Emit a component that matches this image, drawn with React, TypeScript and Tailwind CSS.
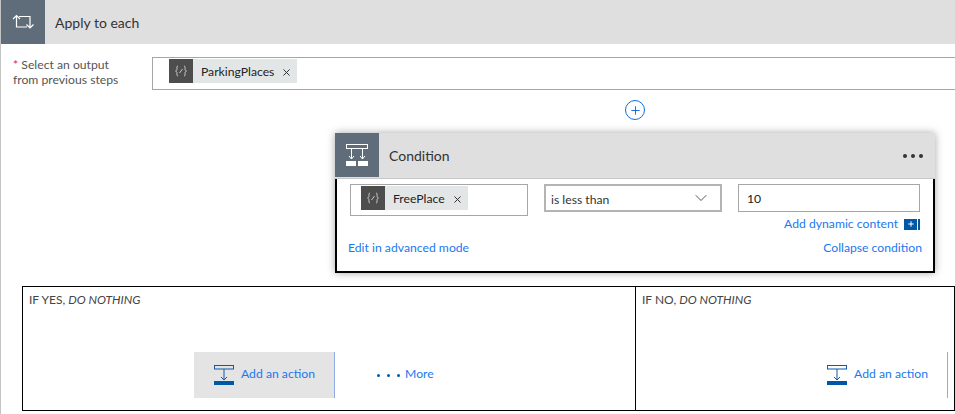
import { X, ChevronDown, Plus } from "lucide-react";

const font = { fontFamily: "Lato, 'Noto Sans', sans-serif" };

function Token({ label }: { label: string }) {
  return (
    <div className="flex h-6 items-center bg-[#e3e6e6]">
      <div className="flex h-6 w-6 items-center justify-center bg-[#4d4d4d]">
        <svg width="14" height="12" viewBox="0 0 14 12" fill="none" stroke="#c8c8c8" strokeWidth="1">
          <path d="M4 1C2.500 1 3 3 3 4S2.600 5.600 1.500 6C2.600 6.400 3 7 3 8s-.5 3 1 3" />
          <path d="M10 1c1.500 0 1 2 1 3s.4 1.600 1.500 2C11.400 6.400 11 7 11 8s.5 3-1 3" />
          <path d="M5.500 8 8.500 4" />
        </svg>
      </div>
      <span className="pl-2 pr-[7px] pt-[2px] text-[12.2px] text-[#222]">{label}</span>
      <X size={11} strokeWidth={2} className="mr-[5px] mt-[3px] text-[#222]" />
    </div>
  );
}

function ActionIcon() {
  return (
    <svg width="20" height="20" viewBox="0 0 20 20" fill="none" className="shrink-0">
      <rect x="0.500" y="0.500" width="19" height="3.500" stroke="#0f5ba8" />
      <path d="M10 4v11M7 12l3 3 3-3" stroke="#0f5ba8" />
      <rect x="0" y="16" width="20" height="4" fill="#0057a6" />
    </svg>
  );
}

export default function App() {
  return (
    <div className="h-[414px] w-[955px] overflow-hidden border-l border-[#c4c4c4] bg-white" style={font}>
      {/* apply to each */}
      <div className="flex h-11 items-center bg-[#dfdfdf]">
        <div className="flex h-11 w-11 items-center justify-center bg-[#5f6d7b]">
          <svg width="22" height="16" viewBox="0 0 22 16" fill="none" stroke="#fff" strokeWidth="1.200">
            <path d="M1 5l3.500-3.500L8 5M4.500 2v11H15" />
            <path d="M7 2.500h11V14M14.500 10.500 18 14l3.500-3.500" />
          </svg>
        </div>
        <span className="pl-[10px] pt-[1px] text-[14px] text-[#333]">Apply to each</span>
      </div>

      <div className="flex pl-3 pt-[13px]">
        <div className="w-[139px] text-[12.2px] leading-[15px] text-[#555]">
          <span className="text-[#e8114e]">*</span> Select an output
          <br />
          from previous steps
        </div>
        <div className="flex h-[33px] flex-1 items-start border border-r-0 border-[#a6a6a6] pl-4 pt-[1px]">
          <Token label="ParkingPlaces" />
        </div>
      </div>

      <div className="flex justify-center pl-[314px] pt-[10px]">
        <div className="flex h-5 w-5 items-center justify-center rounded-full border border-[#0a6fe0] bg-white text-[#0a6fe0]">
          <Plus size={13} strokeWidth={1.8} />
        </div>
      </div>

      {/* condition card */}
      <div className="ml-[334px] mt-[13px] w-[600px] shadow-[0_0_8px_rgba(0,0,0,0.35)]">
        <div className="flex h-[46px] items-center border-b border-[#c8c8c8] bg-[#dfdfdf]">
          <div className="flex h-[44px] w-11 items-center justify-center self-start bg-[#5f6d7b]">
            <svg width="24" height="24" viewBox="0 0 24 24" fill="none">
              <rect x="1.500" y="1.500" width="21" height="4" stroke="#fff" />
              <path d="M6.500 6v10M17.500 6v10M4 13l2.500 3L9 13M15 13l2.500 3 2.500-3" stroke="#fff" />
              <rect x="1" y="18" width="10" height="5" fill="#fff" />
              <rect x="13" y="18" width="10" height="5" fill="#fff" />
            </svg>
          </div>
          <span className="pl-[10px] text-[14px] text-[#333]">Condition</span>
          <div className="ml-auto mr-3 flex gap-1">
            <span className="h-1 w-1 rounded-full bg-[#333]" />
            <span className="h-1 w-1 rounded-full bg-[#333]" />
            <span className="h-1 w-1 rounded-full bg-[#333]" />
          </div>
        </div>
        <div className="h-[94px] border-x-2 border-b-2 border-black bg-white px-[13px]">
          <div className="flex pt-[5px]">
            <div className="flex h-8 w-[178px] items-start border border-[#a6a6a6] pl-[10px] pt-[1px]">
              <Token label="FreePlace" />
            </div>
            <div className="ml-4 flex h-7 w-[178px] items-center justify-between border-2 border-[#b4b4b4] pl-[5px] pr-[9px] pt-[4px] text-[12.2px] text-[#333]">
              is less than
              <ChevronDown size={20} strokeWidth={1} className="-mt-[4px] text-[#333]" />
            </div>
            <div className="ml-4 flex h-7 w-[182px] items-center border border-[#a6a6a6] pl-2 pt-[2px] text-[12.2px] text-[#222]">
              10
            </div>
          </div>
          <div className="mt-[-1px] flex items-center justify-end text-[12.2px] text-[#1a78f0]">
            <span>Add dynamic content</span>
            <span className="ml-[6px] flex h-[11px] w-[13px] items-center justify-center bg-[#0057a6]">
              <Plus size={8} strokeWidth={3} className="text-white" />
            </span>
            <span className="ml-[1px] h-[11px] w-[2px] bg-[#0057a6]" />
          </div>
          <div className="mt-[6px] flex justify-between text-[12.2px] text-[#1a78f0]">
            <span className="-ml-[2px]">Edit in advanced mode</span>
            <span className="-mr-[2px]">Collapse condition</span>
          </div>
        </div>
      </div>

      {/* branches */}
      <div className="ml-[21px] mt-[13px] flex h-[125px] border border-black">
        <div className="flex w-[613px] flex-col border-r border-black pl-[6px] pt-[4px]">
          <div className="text-[12px] text-[#444]">
            IF YES, <em>DO NOTHING</em>
          </div>
          <div className="mt-[43px] flex h-[46px] items-stretch pl-[165px]">
            <div className="flex w-[141px] items-center gap-[7px] border-r border-[#8fa8e8] bg-[#e4e4e4] pl-5 text-[12.2px] text-[#1a78f0]">
              <ActionIcon />
              <span className="pb-[2px]">Add an action</span>
            </div>
            <div className="flex items-center pl-[42px] text-[12.2px] text-[#1a78f0]">
              <span className="mr-[5px] flex gap-[7px]">
                <span className="h-[3px] w-[3px] rounded-full bg-[#0057a6]" />
                <span className="h-[3px] w-[3px] rounded-full bg-[#0057a6]" />
                <span className="h-[3px] w-[3px] rounded-full bg-[#0057a6]" />
              </span>
              <span className="pb-[2px]">More</span>
            </div>
          </div>
        </div>
        <div className="flex flex-1 flex-col pl-[6px] pt-[4px]">
          <div className="text-[12px] text-[#444]">
            IF NO, <em>DO NOTHING</em>
          </div>
          <div className="mt-[43px] flex h-[46px] items-center justify-end pr-[6px]">
            <div className="flex h-full items-center gap-[7px] border-r border-[#8fa8e8] pr-[19px] text-[12.2px] text-[#1a78f0]">
              <ActionIcon />
              <span className="pb-[2px]">Add an action</span>
            </div>
          </div>
        </div>
      </div>
    </div>
  );
}
